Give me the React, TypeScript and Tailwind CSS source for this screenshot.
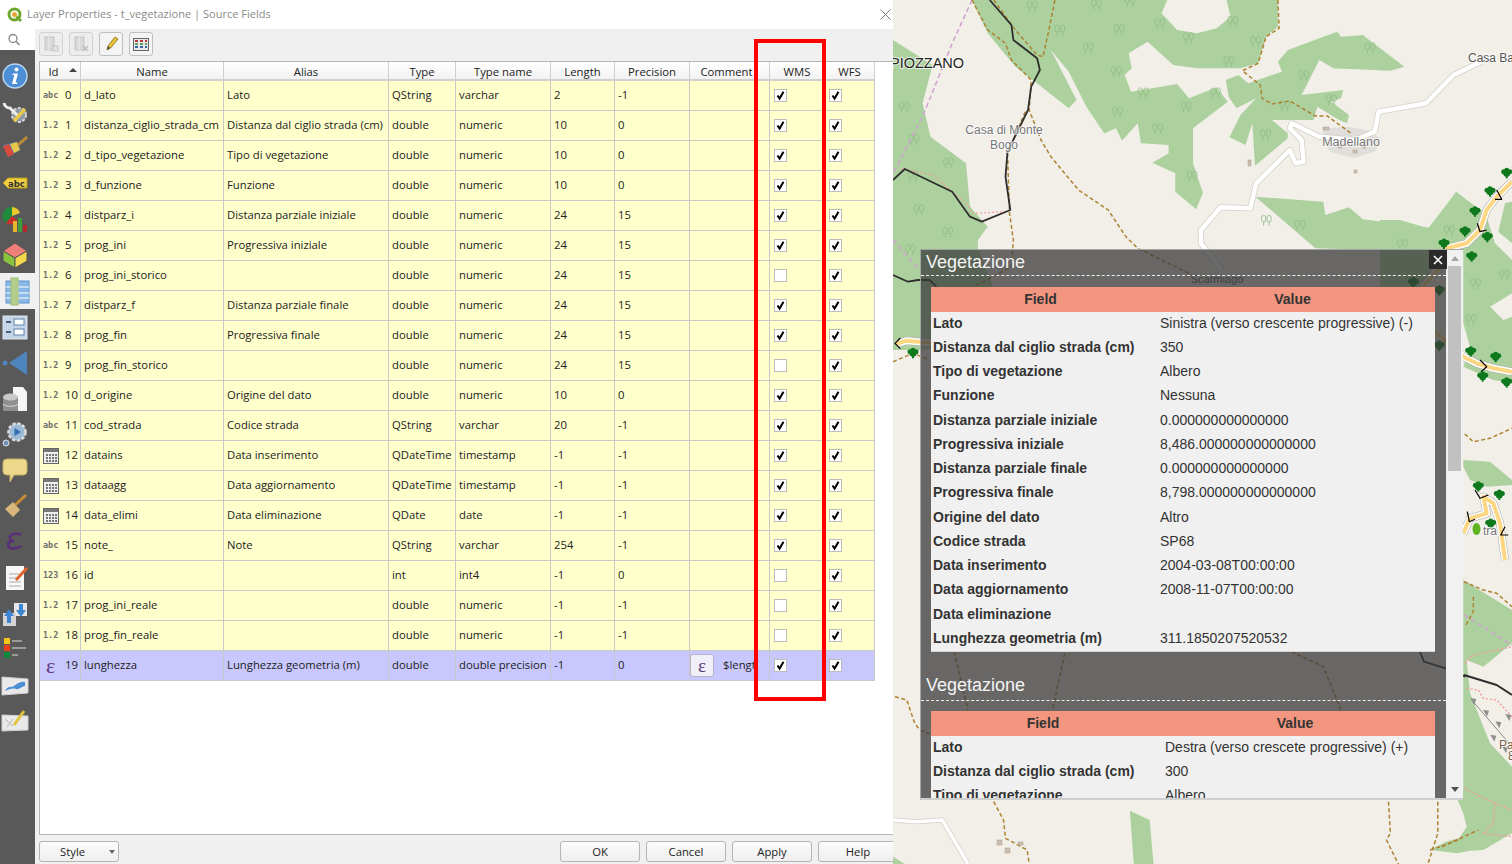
import type { ReactNode } from "react";

type Kind = "abc" | "1.2" | "123" | "date" | "eps";
type Field = { kind: Kind; name: string; alias: string; type: string; typeName: string; length: string; precision: string; wms: boolean };

const fields: Field[] = [
  { kind: "abc", name: "d_lato", alias: "Lato", type: "QString", typeName: "varchar", length: "2", precision: "-1", wms: true },
  { kind: "1.2", name: "distanza_ciglio_strada_cm", alias: "Distanza dal ciglio strada (cm)", type: "double", typeName: "numeric", length: "10", precision: "0", wms: true },
  { kind: "1.2", name: "d_tipo_vegetazione", alias: "Tipo di vegetazione", type: "double", typeName: "numeric", length: "10", precision: "0", wms: true },
  { kind: "1.2", name: "d_funzione", alias: "Funzione", type: "double", typeName: "numeric", length: "10", precision: "0", wms: true },
  { kind: "1.2", name: "distparz_i", alias: "Distanza parziale iniziale", type: "double", typeName: "numeric", length: "24", precision: "15", wms: true },
  { kind: "1.2", name: "prog_ini", alias: "Progressiva iniziale", type: "double", typeName: "numeric", length: "24", precision: "15", wms: true },
  { kind: "1.2", name: "prog_ini_storico", alias: "", type: "double", typeName: "numeric", length: "24", precision: "15", wms: false },
  { kind: "1.2", name: "distparz_f", alias: "Distanza parziale finale", type: "double", typeName: "numeric", length: "24", precision: "15", wms: true },
  { kind: "1.2", name: "prog_fin", alias: "Progressiva finale", type: "double", typeName: "numeric", length: "24", precision: "15", wms: true },
  { kind: "1.2", name: "prog_fin_storico", alias: "", type: "double", typeName: "numeric", length: "24", precision: "15", wms: false },
  { kind: "1.2", name: "d_origine", alias: "Origine del dato", type: "double", typeName: "numeric", length: "10", precision: "0", wms: true },
  { kind: "abc", name: "cod_strada", alias: "Codice strada", type: "QString", typeName: "varchar", length: "20", precision: "-1", wms: true },
  { kind: "date", name: "datains", alias: "Data inserimento", type: "QDateTime", typeName: "timestamp", length: "-1", precision: "-1", wms: true },
  { kind: "date", name: "dataagg", alias: "Data aggiornamento", type: "QDateTime", typeName: "timestamp", length: "-1", precision: "-1", wms: true },
  { kind: "date", name: "data_elimi", alias: "Data eliminazione", type: "QDate", typeName: "date", length: "-1", precision: "-1", wms: true },
  { kind: "abc", name: "note_", alias: "Note", type: "QString", typeName: "varchar", length: "254", precision: "-1", wms: true },
  { kind: "123", name: "id", alias: "", type: "int", typeName: "int4", length: "-1", precision: "0", wms: false },
  { kind: "1.2", name: "prog_ini_reale", alias: "", type: "double", typeName: "numeric", length: "-1", precision: "-1", wms: false },
  { kind: "1.2", name: "prog_fin_reale", alias: "", type: "double", typeName: "numeric", length: "-1", precision: "-1", wms: false },
  { kind: "eps", name: "lunghezza", alias: "Lunghezza geometria (m)", type: "double", typeName: "double precision", length: "-1", precision: "0", wms: true },
];

const popupRows = [
  ["Lato", "Sinistra (verso crescente progressive) (-)"],
  ["Distanza dal ciglio strada (cm)", "350"],
  ["Tipo di vegetazione", "Albero"],
  ["Funzione", "Nessuna"],
  ["Distanza parziale iniziale", "0.000000000000000"],
  ["Progressiva iniziale", "8,486.000000000000000"],
  ["Distanza parziale finale", "0.000000000000000"],
  ["Progressiva finale", "8,798.000000000000000"],
  ["Origine del dato", "Altro"],
  ["Codice strada", "SP68"],
  ["Data inserimento", "2004-03-08T00:00:00"],
  ["Data aggiornamento", "2008-11-07T00:00:00"],
  ["Data eliminazione", ""],
  ["Lunghezza geometria (m)", "311.1850207520532"],
];

const popupRows2 = [
  ["Lato", "Destra (verso crescete progressive) (+)"],
  ["Distanza dal ciglio strada (cm)", "300"],
  ["Tipo di vegetazione", "Albero"],
];

const CalendarIcon = () => (
  <svg width="16" height="17" viewBox="0 0 16 17">
    <rect x="0.5" y="1.5" width="15" height="15" fill="#eeeeee" stroke="#666" />
    <rect x="1" y="2" width="14" height="3" fill="#777" />
    <g fill="#777">
      {[3, 6, 9, 12].map((x) => [7, 10, 13].map((y) => <rect key={`${x}-${y}`} x={x} y={y} width="2" height="2" />))}
    </g>
  </svg>
);

const Epsilon = ({ className }: { className: string }) => (
  <span className={`font-['Liberation_Serif',serif] leading-none text-[#5d3a80] ${className}`}>ε</span>
);

const TypeIcon = ({ kind }: { kind: Kind }) => {
  if (kind === "date") return <CalendarIcon />;
  if (kind === "eps") return <Epsilon className="text-[22px] ml-[3px]" />;
  return <span className="font-['DejaVu_Sans_Mono',monospace] text-[8.5px] font-bold text-[#6f6f6f]">{kind}</span>;
};

const Check = ({ on }: { on: boolean }) => (
  <span className="inline-flex h-[13px] w-[13px] items-center justify-center border border-[#bdbdbd] bg-white">
    {on && (
      <svg width="11" height="11" viewBox="0 0 11 11">
        <path d="M2.5 5.5 L4.6 8.6 L8.5 1.8" fill="none" stroke="#000" strokeWidth="2" />
      </svg>
    )}
  </span>
);

const SideIcon = ({ children, active }: { children: ReactNode; active?: boolean }) => (
  <div className={`flex h-[35.85px] w-[35px] items-center ${active ? "bg-[#f0f0f0]" : ""}`}>
    <svg width="30" height="30" viewBox="0 0 30 30">
      {children}
    </svg>
  </div>
);

const Sidebar = () => (
  <div className="flex w-[35px] shrink-0 flex-col bg-[#595959]">
    <div className="flex h-[21px] items-center bg-white pl-[7px]">
      <svg width="14" height="14" viewBox="0 0 14 14">
        <circle cx="6" cy="5.5" r="4" fill="none" stroke="#888" strokeWidth="1.3" />
        <path d="M9 8.5 L12.5 12" stroke="#888" strokeWidth="1.6" />
      </svg>
    </div>
    <div className="flex flex-col pt-[8px]">
      <SideIcon>
        <circle cx="15" cy="15" r="12" fill="#4d8fd6" stroke="#b9d4f0" strokeWidth="1.5" />
        <circle cx="16.5" cy="8.5" r="2" fill="#fff" />
        <path d="M13 12.5h5l-2.4 9h2l-.6 1.6h-5l2.4-9h-2z" fill="#fff" />
      </SideIcon>
      <SideIcon>
        <circle cx="19" cy="18" r="7" fill="#8d99a6" stroke="#d5d5d5" strokeWidth="2" strokeDasharray="3 1.5" />
        <path d="M4 6c1 4 4 5 6 5l9 9" fill="none" stroke="#eee" strokeWidth="3" />
        <path d="M14 24 L25 12" stroke="#e6c84a" strokeWidth="3.5" />
      </SideIcon>
      <SideIcon>
        <path d="M3 12 L17 9 L20 17 L8 24z" fill="#4b86c9" />
        <path d="M3 13 L8 24 L14 21 L9 11z" fill="#d94a3a" />
        <path d="M10 11 L17 9 L20 17 L14 20z" fill="#e8c64c" />
        <path d="M18 12 L27 4" stroke="#c08b3c" strokeWidth="3" />
      </SideIcon>
      <SideIcon>
        <path d="M3 15 L8 10 H27 V20 H8z" fill="#f1cf3f" stroke="#b89a1e" />
        <text x="8" y="18.500" fontSize="8.500" fontWeight="bold" fontFamily="DejaVu Sans" fill="#333">abc</text>
      </SideIcon>
      <SideIcon>
        <path d="M12 3 A9 9 0 0 1 20 9 L12 12z" fill="#e7c92e" />
        <path d="M12 3 A9 9 0 0 0 6 19 L12 12z" fill="#1f8a3a" />
        <path d="M6 19 A9 9 0 0 0 18 17 L12 12z" fill="#c9302c" />
        <rect x="13" y="17" width="4" height="11" fill="#e7b52e" />
        <rect x="18" y="14" width="4" height="14" fill="#3d9c3d" />
        <rect x="23" y="21" width="4" height="7" fill="#b3272a" />
      </SideIcon>
      <SideIcon>
        <path d="M15 3 L27 11 L15 18 L3 11z" fill="#ee7e78" stroke="#555" />
        <path d="M3 11 L15 18 V28 L3 21z" fill="#88c440" stroke="#555" />
        <path d="M27 11 L15 18 V28 L27 21z" fill="#f2d84a" stroke="#555" />
      </SideIcon>
      <SideIcon active>
        <rect x="6" y="5" width="23" height="22" fill="#8ab8e6" stroke="#5f93cc" />
        <path d="M6 11H29M6 17H29M6 22H29M18 5V27" stroke="#fff" />
        <rect x="11" y="2" width="7" height="27" fill="#b3cf8d" stroke="#9cbc77" />
      </SideIcon>
      <SideIcon>
        <rect x="3" y="4" width="24" height="23" fill="#c5d6e8" stroke="#dde6ef" />
        <rect x="14" y="7" width="10" height="6" fill="#fff" stroke="#5f83a8" />
        <rect x="14" y="17" width="10" height="6" fill="#fff" stroke="#5f83a8" />
        <path d="M6 10h5M6 20h5" stroke="#4a5f77" strokeWidth="2" />
      </SideIcon>
      <SideIcon>
        <path d="M9 15 L27 3 V27z" fill="#4f85bd" />
        <circle cx="5" cy="15" r="2.5" fill="#4f85bd" />
      </SideIcon>
      <SideIcon>
        <path d="M13 3h10l4 5v19H13z" fill="#f5f5f5" />
        <rect x="3" y="13" width="15" height="14" fill="#8f8f8f" />
        <ellipse cx="10.500" cy="13" rx="7.500" ry="3.500" fill="#c9c9c9" />
        <path d="M3 20c2 3 13 3 15 0" fill="none" stroke="#d9d9d9" />
      </SideIcon>
      <SideIcon>
        <circle cx="17" cy="13" r="8.500" fill="#9db9d8" stroke="#dadada" strokeWidth="2.500" strokeDasharray="3.500 1.500" />
        <path d="M14.500 9 L21 13 L14.500 17z" fill="#2f6fb3" />
        <circle cx="6" cy="24" r="3" fill="#6d92bd" stroke="#ddd" />
      </SideIcon>
      <SideIcon>
        <path d="M7 4h16a4 4 0 0 1 4 4v8a4 4 0 0 1-4 4h-9l-4 7v-7H7a4 4 0 0 1-4-4V8a4 4 0 0 1 4-4z" fill="#ecd78a" stroke="#c9b262" />
      </SideIcon>
      <SideIcon>
        <path d="M14 15 L26 4" stroke="#c98d35" strokeWidth="3" />
        <path d="M5 18 L13 11 L20 19 L13 26z" fill="#d7b77b" />
      </SideIcon>
      <SideIcon>
        <path d="M21 8c-2-2-10-2-11 2-.5 2 1 3.500 4 4-3.500 0-6 1.500-6 4 0 4 8 5 13 1" fill="none" stroke="#5a2d78" strokeWidth="2.500" />
      </SideIcon>
      <SideIcon>
        <path d="M6 3h18v24H6z" fill="#f7f7f7" />
        <path d="M9 11h10M9 15h10M9 19h12M9 23h12" stroke="#aaa" />
        <path d="M16 17 L27 5" stroke="#e0632e" strokeWidth="3" />
      </SideIcon>
      <SideIcon>
        <rect x="14" y="4" width="13" height="13" fill="#e6e6e6" />
        <rect x="3" y="14" width="13" height="13" fill="#d5d5d5" />
        <path d="M4 17 L9 10 L14 17h-3v7H7v-7z" fill="#3f86d1" />
        <path d="M16 11h3V5h4v6h3l-5 7z" fill="#3f86d1" />
      </SideIcon>
      <SideIcon>
        <rect x="4" y="4" width="6" height="6" fill="#f5c518" />
        <rect x="4" y="11" width="6" height="6" fill="#e8401c" />
        <rect x="4" y="18" width="6" height="6" fill="#0f8a3c" />
        <path d="M12 7h10M12 14h14M12 21h6" stroke="#9a9a9a" strokeWidth="2" />
      </SideIcon>
      <SideIcon>
        <path d="M2 7 L28 9 V23 L2 25z" fill="#e9e9e9" stroke="#cfcfcf" />
        <path d="M5 21c3-6 6-3 9-5s6-5 11-4v4c-5 1-6 4-9 3s-7 0-11 2z" fill="#4c8fd6" />
      </SideIcon>
      <SideIcon>
        <path d="M2 9 L28 10 V24 L2 25z" fill="#e9e9e9" stroke="#cfcfcf" />
        <path d="M5 13l8 7M13 13l-6 8" stroke="#b5b5b5" />
        <path d="M14 19 L24 5" stroke="#e2c53c" strokeWidth="3" />
      </SideIcon>
    </div>
  </div>
);

const ToolButton = ({ children, faded }: { children: ReactNode; faded?: boolean }) => (
  <div className={`flex h-[24px] w-[24px] items-center justify-center rounded-[3px] border border-[#bfbfbf] ${faded ? "bg-[#ececec] opacity-60" : "bg-[#f4f4f4]"}`}>
    <svg width="18" height="18" viewBox="0 0 18 18">
      {children}
    </svg>
  </div>
);

const headers = ["Id", "Name", "Alias", "Type", "Type name", "Length", "Precision", "Comment", "WMS", "WFS"];
const widths = ["w-[41px]", "w-[143px]", "w-[165px]", "w-[67px]", "w-[95px]", "w-[64px]", "w-[75px]", "w-[80px]", "w-[55px]", "w-[50px]"];

const FieldTable = () => (
  <table className="w-[835px] table-fixed border-separate border-spacing-0 text-[11.3px] text-[#222]">
    <colgroup>
      {widths.map((w) => (
        <col key={w} className={w} />
      ))}
    </colgroup>
    <thead>
      <tr>
        {headers.map((h, i) => (
          <th key={h} className="relative h-[19px] border-r border-b-2 border-[#d0d0d0] bg-gradient-to-b from-white to-[#f2f2f2] p-0 pt-[2px] text-center font-normal leading-none">
            {h === "Id" ? <span className="mr-[13px]">{h}</span> : <span className={i === 7 ? "mr-[6px]" : ""}>{h}</span>}
            {h === "Id" && <span className="absolute right-[3px] top-[6px] h-0 w-0 border-x-[4px] border-b-[4px] border-x-transparent border-b-[#444]" />}
          </th>
        ))}
      </tr>
    </thead>
    <tbody>
      {fields.map((f, i) => {
        const bg = f.kind === "eps" ? "bg-[#c8c8ff]" : "bg-[#ffffcc]";
        const cell = `h-[30px] border-r border-b border-[#c8c8c8] p-0 pl-[3px] whitespace-nowrap overflow-hidden ${bg}`;
        return (
          <tr key={f.name}>
            <td className={cell}>
              <div className="flex items-center">
                <span className="flex w-[22px] items-center">
                  <TypeIcon kind={f.kind} />
                </span>
                <span>{i}</span>
              </div>
            </td>
            <td className={cell}>{f.name}</td>
            <td className={cell}>{f.alias}</td>
            <td className={cell}>{f.type}</td>
            <td className={cell}>{f.typeName}</td>
            <td className={cell}>{f.length}</td>
            <td className={cell}>{f.precision}</td>
            <td className={`${cell} !pl-0`}>
              {f.kind === "eps" && (
                <div className="flex items-center">
                  <span className="flex h-[23px] w-[24px] items-center justify-center rounded-[3px] border border-[#b5b5c8] bg-[#f1f0f8]">
                    <Epsilon className="text-[19px]" />
                  </span>
                  <span className="ml-[9px] w-[33px] overflow-hidden">$length</span>
                </div>
              )}
            </td>
            <td className={`${cell} !pl-[4px]`}>
              <div className="flex items-center">
                <Check on={f.wms} />
              </div>
            </td>
            <td className={`${cell} !pl-[4px]`}>
              <div className="flex items-center">
                <Check on />
              </div>
            </td>
          </tr>
        );
      })}
    </tbody>
  </table>
);

const FootButton = ({ label }: { label: string }) => (
  <button className="h-[21px] w-[80px] shrink-0 rounded-[3px] border border-[#b4b4b4] bg-gradient-to-b from-[#fbfbfb] to-[#efefef] text-[11.3px] leading-none text-[#222]">{label}</button>
);

const Dialog = () => (
  <div className="relative flex h-full w-[893px] shrink-0 flex-col overflow-hidden bg-[#f0f0f0]">
    <div className="flex h-[29px] shrink-0 items-center bg-white pl-[7px] pr-[2px]">
      <svg width="16" height="16" viewBox="0 0 16 16">
        <circle cx="7.500" cy="7.500" r="5.500" fill="none" stroke="#6ea92f" strokeWidth="3" />
        <circle cx="7.500" cy="7.500" r="2.500" fill="#e9a53b" />
        <path d="M9.500 9.500 L14 14" stroke="#6ea92f" strokeWidth="3" />
      </svg>
      <span className="ml-[4px] text-[11.05px] text-[#8b8b8b]">Layer Properties - t_vegetazione | Source Fields</span>
      <svg className="ml-auto" width="11" height="11" viewBox="0 0 11 11">
        <path d="M.5.5l10 10M10.500.5l-10 10" stroke="#777" />
      </svg>
    </div>
    <div className="flex min-h-0 flex-1">
      <Sidebar />
      <div className="flex min-w-0 flex-1 flex-col pl-[4px]">
        <div className="flex h-[32px] shrink-0 items-start gap-[6px] pt-[3px]">
          <ToolButton faded>
            <rect x="3" y="2" width="9" height="13" fill="#c9c9c9" stroke="#aaa" />
            <path d="M7 2v13" stroke="#eee" />
            <rect x="11" y="11" width="5" height="5" fill="#ddd" stroke="#aaa" />
          </ToolButton>
          <ToolButton faded>
            <rect x="3" y="2" width="9" height="13" fill="#c9c9c9" stroke="#aaa" />
            <path d="M7 2v13" stroke="#eee" />
            <path d="M11 11l5 5M16 11l-5 5" stroke="#999" strokeWidth="1.500" />
          </ToolButton>
          <ToolButton>
            <path d="M5 15 L6 11 L13 2 L16 4 L8.500 13z" fill="#e8c53a" stroke="#9a8120" />
            <path d="M5 15 L6 11 L8.500 13z" fill="#555" />
          </ToolButton>
          <ToolButton>
            <rect x="1.500" y="3.500" width="15" height="12" fill="#e8e8e8" stroke="#666" />
            <path d="M3 6h3M8 6h3M13 6h2" stroke="#b23a3a" strokeWidth="2" />
            <path d="M3 9h3M8 9h3M13 9h2" stroke="#2f8a3c" strokeWidth="1.500" />
            <path d="M3 12h12" stroke="#2f68a8" strokeWidth="2" strokeDasharray="3 2" />
          </ToolButton>
        </div>
        <div className="min-h-0 flex-1 border border-r-0 border-[#b5b5b5] bg-white">
          <FieldTable />
        </div>
        <div className="flex h-[29px] shrink-0 items-start pt-[6px]">
          <div className="relative h-[21px] w-[80px] rounded-[3px] border border-[#b4b4b4] bg-gradient-to-b from-[#fbfbfb] to-[#efefef] pl-[20px] text-[11.3px] leading-[19px] text-[#222]">
            Style
            <span className="absolute right-[3px] top-[8px] h-0 w-0 border-x-[3px] border-t-[4px] border-x-transparent border-t-[#666]" />
          </div>
          <div className="ml-auto -mr-[5px] flex gap-[6px]">
            <FootButton label="OK" />
            <FootButton label="Cancel" />
            <FootButton label="Apply" />
            <FootButton label="Help" />
          </div>
        </div>
      </div>
    </div>
    <div className="pointer-events-none absolute left-[754px] top-[39px] h-[662px] w-[72px] border-[4px] border-[#ff0000]" />
  </div>
);

const conv = (pts: string, sx: number, sy: number, ox: number, oy: number) =>
  pts
    .trim()
    .split(/\s+/)
    .map((p) => {
      const [x, y] = p.split(",").map(Number);
      return `${(ox + x * sx).toFixed(1)},${(oy + y * sy).toFixed(1)}`;
    })
    .join(" ");

const top = (s: string) => conv(s, 1 / 2.533, 1 / 3, 0, 0);
const low = (s: string) => conv(s, 1 / 2.533, 1 / 3, 0, 620);
const z8 = (s: string) => conv(s, 1 / 3, 1 / 3, 487, 160);
const z11 = (s: string) => conv(s, 1 / 3, 1 / 3, 547, 540);
const z10 = (s: string) => conv(s, 1 / 3, 1 / 3, 0, 240);

const greens = [
  top("200,0 695,0 680,40 720,90 770,100 820,85 855,50 845,0 975,0 975,80 945,110 925,190 880,205 770,205 710,195 645,125 597,160 605,205 587,225 603,275 720,252 750,295 820,262 848,305 760,385 760,490 785,578 768,628 715,575 715,520 657,488 698,460 698,435 628,430 620,370 580,422 565,385 535,400 490,320 445,215 400,150 465,300 445,325 360,245 310,200 240,100"),
  top("0,120 100,195 75,310 95,410 185,490 195,620 240,680 215,720 215,745 300,1000 0,1040"),
  top("843,240 875,225 900,250 985,215 975,185 1000,150 1125,95 1135,110 1190,105 1295,200 1260,212 1115,205 1080,180 1035,285 1140,270 1135,295 1110,305 1155,345 1150,370 1130,360 1075,320 1065,360 960,360 1000,400 1000,415 917,497 910,370 893,435 852,412 880,345 920,295 870,325 850,290"),
  top("918,590 1090,605 1095,645 1155,622 1190,658 1355,683 1425,648 1425,575 1500,640 1480,760 1070,745"),
  z8("229,95 320,170 345,250 396,300 396,400 330,440 370,480 396,470 396,670 340,660 250,620 270,560 250,490 250,265 200,265 120,380 0,380 0,180 60,180 145,205"),
  z8("375,130 396,125 396,250 355,215"),
  z8("250,900 330,905 396,960 396,975 320,980 270,960 250,920"),
  z11("70,120 216,210 216,310 130,380 80,360 90,460 150,610 216,680 216,880 130,930 30,935 80,860 70,820 40,750 70,750"),
  z10("0,0 80,0 300,300 80,330 0,330"),
  low("600,572 650,600 660,732 610,732"),
  low("0,710 30,732 0,732"),
  low("1360,690 1400,665 1480,640 1510,680 1430,700"),
];

const trails = [
  top("200,0 240,90 285,130 300,180 350,240 345,330 375,420 400,470 470,570 545,630 590,710 620,745 750,820"),
  top("255,0 310,90 365,165 380,170 395,90 410,0"),
  top("975,0 978,85 945,110 925,190 885,212 930,255 935,295 960,312 1005,303 1070,348 1100,348 1160,400"),
  top("335,335 290,460 295,640 305,720 300,800 205,860"),
  z8("254,822 280,845 330,835 396,805"),
  z11("72,125 130,150 170,160 216,200"),
  z11("100,170 100,215 75,260"),
  z11("5,920 115,870"),
  z10("0,365 60,340 110,360"),
  low("5,230 35,240 55,310 68,330 90,340 120,350"),
  low("155,95 190,270"),
  low("435,100 405,265"),
  low("1010,95 1090,140 1135,270"),
  low("255,545 280,600 285,655 340,690 345,732"),
  low("1255,545 1260,640 1250,660 1280,732"),
  low("1380,545 1380,640 1355,732"),
  low("1360,690 1400,675 1440,655"),
];

const whiteRoad = top("1490,185 1420,225 1350,310 1230,335 1220,395 1170,420 1080,410 1010,370 1005,385 1035,420 1040,485 1020,490 1005,450 920,550 905,625 830,622 780,690 780,730 820,790 830,810");
const whiteRoad2 = low("0,600 60,605 125,600 190,732");

const yellowRoads = [
  z8("130,380 190,310 200,265 260,250 300,210 320,150 350,110 396,65"),
  z8("165,515 250,590 290,610 340,625 396,635"),
  z8("250,1120 270,1075 320,1060 310,1010 340,1030 360,1090 375,1200"),
  z10("10,312 40,302 130,310"),
];

const darkTrees = ["380,40", "330,95", "285,155", "255,215", "322,232", "192,252", "275,290", "272,575", "347,592", "308,650", "380,668", "295,980", "358,1005", "332,1092", "100,368", "178,392", "178,558"];

const treeMarks = ["352,20", "515,15", "600,5", "422,92", "572,90", "494,145", "675,72", "748,115", "860,65", "918,125", "850,185", "565,215", "633,280", "817,280", "742,322", "568,337", "670,387", "757,530", "28,322", "52,420", "140,490", "50,530", "65,630", "138,698", "43,750", "943,405", "992,318", "1110,300", "1208,145", "1040,228", "945,662", "1030,677", "1290,735", "1408,693", "1475,852", "1548,825", "1463,960"];

const Line = ({ points, className, dash, w }: { points: string; className: string; dash?: string; w: number }) => (
  <polyline points={points} fill="none" className={className} strokeWidth={w} strokeDasharray={dash} strokeLinejoin="round" />
);

const MapCanvas = () => (
  <svg className="absolute inset-0" width="619" height="864" viewBox="0 0 619 864">
    <rect width="619" height="864" fill="#f2efe9" />
    {greens.map((g, i) => (
      <polygon key={i} points={g} fill="#add19e" />
    ))}
    {treeMarks.map((t) => {
      const [x, y] = top(t).split(",").map(Number);
      return (
        <g key={t} fill="none" stroke="#8dbd84" strokeWidth="0.8">
          <ellipse cx={x - 2.500} cy={y - 2} rx="2.200" ry="3.500" />
          <ellipse cx={x + 3} cy={y - 2} rx="2.200" ry="3.500" />
          <path d={`M${x - 2.500} ${y + 1}v4M${x + 3} ${y + 1}v4`} />
        </g>
      );
    })}
    <Line points={top("200,0 150,130 75,350 0,520")} className="stroke-[#cfa3cf]" w={1.5} dash="5 3" />
    <Line points={z11("72,225 216,315")} className="stroke-[#cfa3cf]" w={1.5} dash="5 3" />
    <Line points={top("0,720 68,810")} className="stroke-[#cfa3cf]" w={1.5} dash="5 3" />
    <Line points={top("20,505 100,525 190,615 200,640 290,635")} className="stroke-[#f29e9e]" w={1.2} dash="2 2" />
    <Line points={z11("75,370 100,345 216,320")} className="stroke-[#f29e9e]" w={1.5} dash="2 2" />
    <Line points={z11("80,445 115,450 130,475 170,480 216,530")} className="stroke-[#f29e9e]" w={1.5} dash="2 2" />
    <Line points={z11("72,745 165,790 216,810")} className="stroke-[#f29e9e]" w={1.5} dash="2 2" />
    <Line points={z11("165,790 160,850 130,880 216,890")} className="stroke-[#f29e9e]" w={1.5} dash="2 2" />
    <path d="M431 128 l24 -1 l18 3 l14 8 l-4 13 l-22 7 l-24 -6 l-8 -14z" fill="#e0dedb" />
    {trails.map((t, i) => (
      <Line key={i} points={t} className="stroke-[#ad8232]" w={1.5} dash="4 2.500" />
    ))}
    <Line points={whiteRoad} className="stroke-[#d4d0c8]" w={6} />
    <Line points={whiteRoad} className="stroke-white" w={4.500} />
    <Line points={whiteRoad2} className="stroke-[#d4d0c8]" w={5} />
    <Line points={whiteRoad2} className="stroke-white" w={3.500} />
    <Line points={top("245,0 300,75 305,120 365,175 372,210 350,260 342,330 290,455 285,530 297,630 225,665 195,650 150,575 30,507 0,540")} className="stroke-[#2e2e2e]" w={1.8} />
    <Line points={z10("0,105 45,125 75,120 110,120 130,140")} className="stroke-[#2e2e2e]" w={1.8} />
    <Line points={z11("72,405 170,435 216,465")} className="stroke-[#2e2e2e]" w={2} />
    <Line points={low("1335,95 1345,125 1400,145 1450,170")} className="stroke-[#2e2e2e]" w={1.8} />
    {yellowRoads.map((r, i) => (
      <g key={i}>
        <Line points={r} className="stroke-[#a9a9a9]" w={8} />
        <Line points={r} className="stroke-white" w={7} />
        <Line points={r} className="stroke-[#fcd680]" w={4} />
      </g>
    ))}
    <Line points={z8("350,90 365,118 345,118")} className="stroke-black" w={1.2} />
    <Line points={z8("292,190 300,215 320,210")} className="stroke-black" w={1.2} />
    <Line points={z8("300,600 320,620 303,635")} className="stroke-black" w={1.2} />
    <Line points={z8("285,990 300,1015 325,1005")} className="stroke-black" w={1.2} />
    <Line points={z8("262,1055 268,1085 285,1078")} className="stroke-black" w={1.2} />
    <Line points={z8("375,1100 362,1125 385,1125")} className="stroke-black" w={1.2} />
    <Line points={z10("22,294 6,310 22,326")} className="stroke-black" w={1.2} />
    {[...darkTrees.map(z8), z10("60,340")].map((t) => {
      const [x, y] = t.split(",").map(Number);
      return (
        <g key={t} fill="#0f7a1d">
          <circle cx={x} cy={y} r="3.500" />
          <circle cx={x - 3} cy={y - 1.500} r="2.500" />
          <circle cx={x + 3} cy={y - 1.500} r="2.500" />
          <circle cx={x} cy={y - 3} r="2.500" />
          <rect x={x - 1} y={y} width="2" height="5" />
        </g>
      );
    })}
    <ellipse cx="583.500" cy="529" rx="4" ry="6" fill="#5fb31f" />
    <g fill="#cdbfb1" stroke="#a89a8c" strokeWidth="0.500">
      <rect x="430" y="127" width="6" height="3" />
      <rect x="355" y="160" width="3" height="6" />
      <rect x="445" y="145" width="4" height="3" />
      <rect x="460" y="150" width="4" height="3" />
      <rect x="470" y="145" width="3" height="3" />
      <rect x="461" y="170" width="3" height="3" />
      <rect x="104" y="840" width="5" height="5" />
      <rect x="112" y="848" width="5" height="5" />
      <rect x="125" y="842" width="5" height="3" />
    </g>
    <g fill="none" stroke="#8a8a8a" strokeWidth="1">
      <polyline points={z11("95,480 216,620")} />
    </g>
    <g fill="#8f8f8f">
      {["100,480", "138,515", "175,550", "205,528", "160,590", "195,625"].map((t) => {
        const [x, y] = z11(t).split(",").map(Number);
        return <path key={t} d={`M${x - 3} ${y - 2}l6 1l-2 6z`} />;
      })}
    </g>
    <g fontFamily="Liberation Sans, sans-serif" paintOrder="stroke" stroke="#ffffff" strokeOpacity="0.700" strokeWidth="2">
      <text x="-3" y="68" fontSize="14.500" fill="#222">PIOZZANO</text>
      <text x="111" y="134" textAnchor="middle" fontSize="12" fill="#777">Casa di Monte</text>
      <text x="111" y="149" textAnchor="middle" fontSize="12" fill="#777">Bogo</text>
      <text x="458" y="146" textAnchor="middle" fontSize="12.500" fill="#777">Madellano</text>
      <text x="575" y="62" fontSize="12" fill="#555">Casa Bal</text>
      <text x="324" y="283" textAnchor="middle" fontSize="11" fill="#555" strokeWidth="0">Scarmiago</text>
      <text x="590" y="535" fontSize="12" fill="#777">tra</text>
      <text x="606" y="749" fontSize="12" fill="#7b5c45">Pa</text>
      <text x="615" y="760" fontSize="12" fill="#7b5c45">8</text>
    </g>
  </svg>
);

const PopupTable = ({ rows, keyWidth }: { rows: string[][]; keyWidth: string }) => (
  <div className="w-[504px] bg-[#f0f0f0] text-[14px] text-[#333] shadow-[0_1px_0_#d8d8d8]">
    <div className="flex h-[24.500px] bg-[#f29680] pr-[8px] font-bold leading-[24px]">
      <div className={`${keyWidth} pr-[8px] text-center`}>Field</div>
      <div className="flex-1 text-center">Value</div>
    </div>
    {rows.map(([k, v]) => (
      <div key={k} className="flex h-[24.250px] leading-[23px]">
        <div className={`${keyWidth} pl-[2px] font-bold`}>{k}</div>
        <div className="flex-1 whitespace-nowrap pl-[2px]">{v}</div>
      </div>
    ))}
  </div>
);

const Popup = () => (
  <div className="absolute left-[27px] top-[249px] flex h-[551px] w-[543px] overflow-hidden border border-[#a5a5a5] border-r-0 border-b-2 border-b-[#cfcfcf] bg-[#3a3a3a]/75 font-['Liberation_Sans',sans-serif]">
    <div className="min-w-0 flex-1 overflow-hidden">
      <h3 className="h-[25px] pl-[5px] text-[18px] font-normal leading-[24px] text-[#f4f4f4]">Vegetazione</h3>
      <div className="border-b border-dashed border-[#f0f0f0]" />
      <div className="ml-[10px] mt-[11px]">
        <PopupTable rows={popupRows} keyWidth="w-[227px]" />
      </div>
      <h3 className="mt-[21px] h-[26px] pl-[5px] text-[18px] font-normal leading-[26px] text-[#f4f4f4]">Vegetazione</h3>
      <div className="mt-[2px] border-b border-dashed border-[#f0f0f0]" />
      <div className="ml-[10px] mt-[10px]">
        <PopupTable rows={popupRows2} keyWidth="w-[232px]" />
      </div>
    </div>
    <div className="flex w-[17px] shrink-0 flex-col items-center bg-[#f1f1f1]">
      <span className="mt-[6px] h-0 w-0 border-x-[4px] border-b-[5px] border-x-transparent border-b-[#a3a3a3]" />
      <div className="mt-[5px] h-[205px] w-[13px] bg-[#c1c1c1]" />
      <span className="mt-auto mb-[6px] h-0 w-0 border-x-[4px] border-t-[5px] border-x-transparent border-t-[#505050]" />
    </div>
    <div className="absolute right-[16px] top-0 flex h-[19px] w-[18px] items-center justify-center bg-[#2a2a2a]">
      <svg width="10" height="10" viewBox="0 0 10 10">
        <path d="M1 1l8 8M9 1l-8 8" stroke="#fff" strokeWidth="1.600" />
      </svg>
    </div>
  </div>
);

export default function App() {
  return (
    <div className="flex h-[864px] w-[1512px] overflow-hidden bg-white font-['Open_Sans',sans-serif]">
      <Dialog />
      <div className="relative h-full w-[619px] overflow-hidden">
        <MapCanvas />
        <Popup />
      </div>
    </div>
  );
}
